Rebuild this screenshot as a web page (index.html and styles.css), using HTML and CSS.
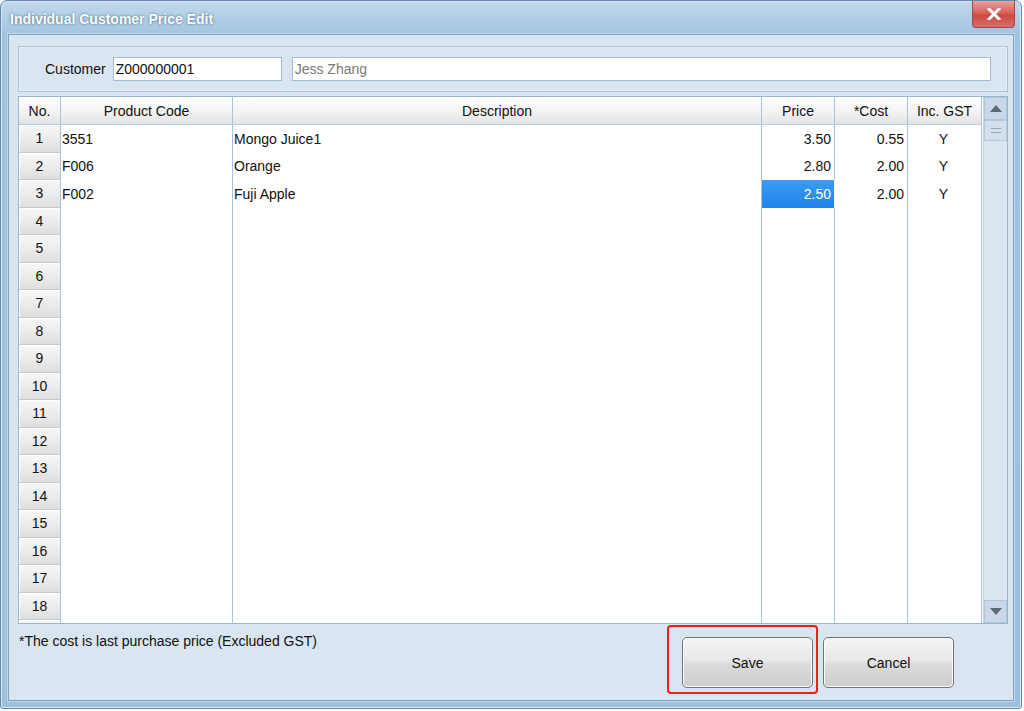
FILE: index.html
```html
<!DOCTYPE html>
<html>
<head>
<meta charset="utf-8">
<link rel="stylesheet" href="styles.css">
</head>
<body>
<div class="window">
  <div class="titlebar">
    <span class="title">Individual Customer Price Edit</span>
    <div class="close"><svg width="14" height="12" viewBox="0 0 14 12"><path d="M2 1 L12 11 M12 1 L2 11" stroke="#ffffff" stroke-width="3" stroke-linecap="square"/></svg></div>
  </div>
  <div class="client">
    <div class="panel">
      <span class="lbl">Customer</span>
      <div class="input code">Z000000001</div>
      <div class="input name">Jess Zhang</div>
    </div>
    <div class="grid">
      <div class="grid-main">
        <div class="hdr">
          <div class="hc">No.</div>
          <div class="hc">Product Code</div>
          <div class="hc">Description</div>
          <div class="hc">Price</div>
          <div class="hc">*Cost</div>
          <div class="hc">Inc. GST</div>
        </div>
        <div class="body">
          <div class="row"><div class="rh">1</div><div class="c l">3551</div><div class="c l">Mongo Juice1</div><div class="c r">3.50</div><div class="c r">0.55</div><div class="c m">Y</div></div>
          <div class="row"><div class="rh">2</div><div class="c l">F006</div><div class="c l">Orange</div><div class="c r">2.80</div><div class="c r">2.00</div><div class="c m">Y</div></div>
          <div class="row"><div class="rh">3</div><div class="c l">F002</div><div class="c l">Fuji Apple</div><div class="c r sel">2.50</div><div class="c r">2.00</div><div class="c m">Y</div></div>
          <div class="row"><div class="rh">4</div><div class="c"></div><div class="c"></div><div class="c"></div><div class="c"></div><div class="c"></div></div>
          <div class="row"><div class="rh">5</div><div class="c"></div><div class="c"></div><div class="c"></div><div class="c"></div><div class="c"></div></div>
          <div class="row"><div class="rh">6</div><div class="c"></div><div class="c"></div><div class="c"></div><div class="c"></div><div class="c"></div></div>
          <div class="row"><div class="rh">7</div><div class="c"></div><div class="c"></div><div class="c"></div><div class="c"></div><div class="c"></div></div>
          <div class="row"><div class="rh">8</div><div class="c"></div><div class="c"></div><div class="c"></div><div class="c"></div><div class="c"></div></div>
          <div class="row"><div class="rh">9</div><div class="c"></div><div class="c"></div><div class="c"></div><div class="c"></div><div class="c"></div></div>
          <div class="row"><div class="rh">10</div><div class="c"></div><div class="c"></div><div class="c"></div><div class="c"></div><div class="c"></div></div>
          <div class="row"><div class="rh">11</div><div class="c"></div><div class="c"></div><div class="c"></div><div class="c"></div><div class="c"></div></div>
          <div class="row"><div class="rh">12</div><div class="c"></div><div class="c"></div><div class="c"></div><div class="c"></div><div class="c"></div></div>
          <div class="row"><div class="rh">13</div><div class="c"></div><div class="c"></div><div class="c"></div><div class="c"></div><div class="c"></div></div>
          <div class="row"><div class="rh">14</div><div class="c"></div><div class="c"></div><div class="c"></div><div class="c"></div><div class="c"></div></div>
          <div class="row"><div class="rh">15</div><div class="c"></div><div class="c"></div><div class="c"></div><div class="c"></div><div class="c"></div></div>
          <div class="row"><div class="rh">16</div><div class="c"></div><div class="c"></div><div class="c"></div><div class="c"></div><div class="c"></div></div>
          <div class="row"><div class="rh">17</div><div class="c"></div><div class="c"></div><div class="c"></div><div class="c"></div><div class="c"></div></div>
          <div class="row"><div class="rh">18</div><div class="c"></div><div class="c"></div><div class="c"></div><div class="c"></div><div class="c"></div></div>
          <div class="row"><div class="rh"></div><div class="c"></div><div class="c"></div><div class="c"></div><div class="c"></div><div class="c"></div></div>
        </div>
      </div>
      <div class="vscroll">
        <div class="sbtn"><svg width="12" height="7" viewBox="0 0 12 7"><path d="M0 7 L6 0 L12 7 Z" fill="#5c6a78"/></svg></div>
        <div class="thumb"><svg width="10" height="5" viewBox="0 0 10 5"><path d="M0 0.5 H10 M0 4.5 H10" stroke="#8fa6bc" stroke-width="1"/></svg></div>
        <div class="track"></div>
        <div class="sbtn"><svg width="12" height="7" viewBox="0 0 12 7"><path d="M0 0 L6 7 L12 0 Z" fill="#5c6a78"/></svg></div>
      </div>
    </div>
    <div class="footer">
      <div class="note">*The cost is last purchase price (Excluded GST)</div>
      <div class="buttons">
        <div class="highlight"><div class="btn">Save</div></div>
        <div class="btn">Cancel</div>
      </div>
    </div>
  </div>
</div>
</body>
</html>
```

FILE: styles.css
```css
html, body {
  margin: 0;
  padding: 0;
  background: #ffffff;
}
body {
  font-family: "Liberation Sans", Arial, sans-serif;
  font-size: 14px;
  color: #111;
}
.window {
  width: 1020px;
  height: 707px;
  border: 1px solid #5f89b1;
  border-radius: 7px 7px 3px 3px;
  background: linear-gradient(#c2d9ee 0px, #a2c3df 34px, #9fc0dd 100%);
  box-shadow: inset 0 0 0 1px #d6e6f4;
  display: flex;
  flex-direction: column;
}
.titlebar {
  height: 33px;
  display: flex;
  align-items: flex-start;
}
.title {
  font-weight: bold;
  font-size: 14px;
  color: #ffffff;
  margin: 10px 0 0 9px;
  text-shadow: 0 0 3px rgba(40, 80, 120, 0.6), 0 0 1px rgba(40, 80, 120, 0.5);
}
.close {
  margin-left: auto;
  margin-right: 6px;
  width: 43px;
  height: 27px;
  border: 1px solid #a04a46;
  border-top: none;
  border-radius: 0 0 4px 4px;
  background: linear-gradient(#eaa19b, #d9625b 45%, #cc4a43 55%, #d97068);
  display: flex;
  align-items: center;
  justify-content: center;
  box-sizing: border-box;
}
.client {
  margin: 0 7px 7px 7px;
  flex: 1;
  background: #d9e5f1;
  border: 1px solid #7fa3c5;
  box-shadow: 0 0 0 1px #c2d7ea;
  display: flex;
  flex-direction: column;
  padding: 11px 5px 0 9px;
}
.panel {
  height: 44px;
  border: 1px solid #a8c3da;
  box-shadow: inset 0 0 0 1px #e4edf6;
  display: flex;
  align-items: center;
  padding: 0 16px 0 26px;
}
.lbl {
  margin-right: 7px;
}
.input {
  line-height: 22px;
  border: 1px solid #a3bcd4;
  background: #fff;
  padding: 0 2px;
  box-sizing: border-box;
  height: 24px;
}
.input.code {
  width: 169px;
  margin-right: 10px;
}
.input.name {
  flex: 1;
  color: #7a7a7a;
}
.grid {
  margin-top: 4px;
  height: 528px;
  border: 1px solid #9ab6cf;
  display: flex;
  background: #fff;
  box-sizing: border-box;
}
.grid-main {
  width: 963px;
  display: flex;
  flex-direction: column;
}
.hdr, .row {
  display: grid;
  grid-template-columns: 42px 172px 529px 73px 73px 74px;
}
.hdr {
  height: 27px;
  flex: none;
  border-bottom: 1px solid #b9cbdc;
}
.hc {
  background: linear-gradient(#ffffff, #f4f4f4 50%, #e3e3e3);
  border-right: 1px solid #aac3da;
  display: flex;
  align-items: center;
  justify-content: center;
  box-sizing: border-box;
}
.body {
  flex: 1;
  overflow: hidden;
}
.row {
  height: 27.5px;
}
.rh {
  background: linear-gradient(#f7f7f7, #ececec 50%, #dedede);
  border-right: 1px solid #aac3da;
  border-bottom: 1px solid #c9c9c9;
  box-shadow: inset 1px 1px 0 #ffffff;
  display: flex;
  align-items: center;
  justify-content: center;
  box-sizing: border-box;
}
.c {
  border-right: 1px solid #aac3da;
  display: flex;
  align-items: center;
  box-sizing: border-box;
  padding: 0 3px 0 1px;
}
.c.r {
  justify-content: flex-end;
}
.c.m {
  justify-content: center;
}
.c.sel {
  background: linear-gradient(#3b9bf5, #1f82e9);
  color: #ffffff;
  margin-right: 1px;
  border-right: none;
}
.vscroll {
  width: 24px;
  margin-left: 1px;
  background: #dbe5ef;
  border-left: 1px solid #c2d3e3;
  display: flex;
  flex-direction: column;
}
.sbtn {
  height: 23px;
  background: #c9d9e9;
  border: 1px solid #b0c6db;
  display: flex;
  align-items: center;
  justify-content: center;
  box-sizing: border-box;
}
.thumb {
  height: 21px;
  background: #d3e0ec;
  border: 1px solid #b6cadd;
  display: flex;
  align-items: center;
  justify-content: center;
  box-sizing: border-box;
}
.track {
  flex: 1;
}
.footer {
  flex: 1;
  display: flex;
  align-items: flex-start;
}
.note {
  margin-top: 9px;
  margin-left: 1px;
}
.buttons {
  margin-left: auto;
  margin-right: 54px;
  display: flex;
  align-items: flex-start;
  gap: 5px;
  margin-top: 1px;
}
.highlight {
  border: 2px solid #f2201c;
  border-radius: 4px;
  padding: 10px 3px 4px 13px;
}
.btn {
  width: 131px;
  height: 51px;
  box-sizing: border-box;
  border: 1px solid #737373;
  border-radius: 5px;
  background: linear-gradient(#f5f5f5, #e8e8e8 45%, #dadada 55%, #cecece);
  box-shadow: inset 0 0 0 1px #fbfbfb;
  display: flex;
  align-items: center;
  justify-content: center;
}
.buttons > .btn {
  margin-top: 12px;
}
```
